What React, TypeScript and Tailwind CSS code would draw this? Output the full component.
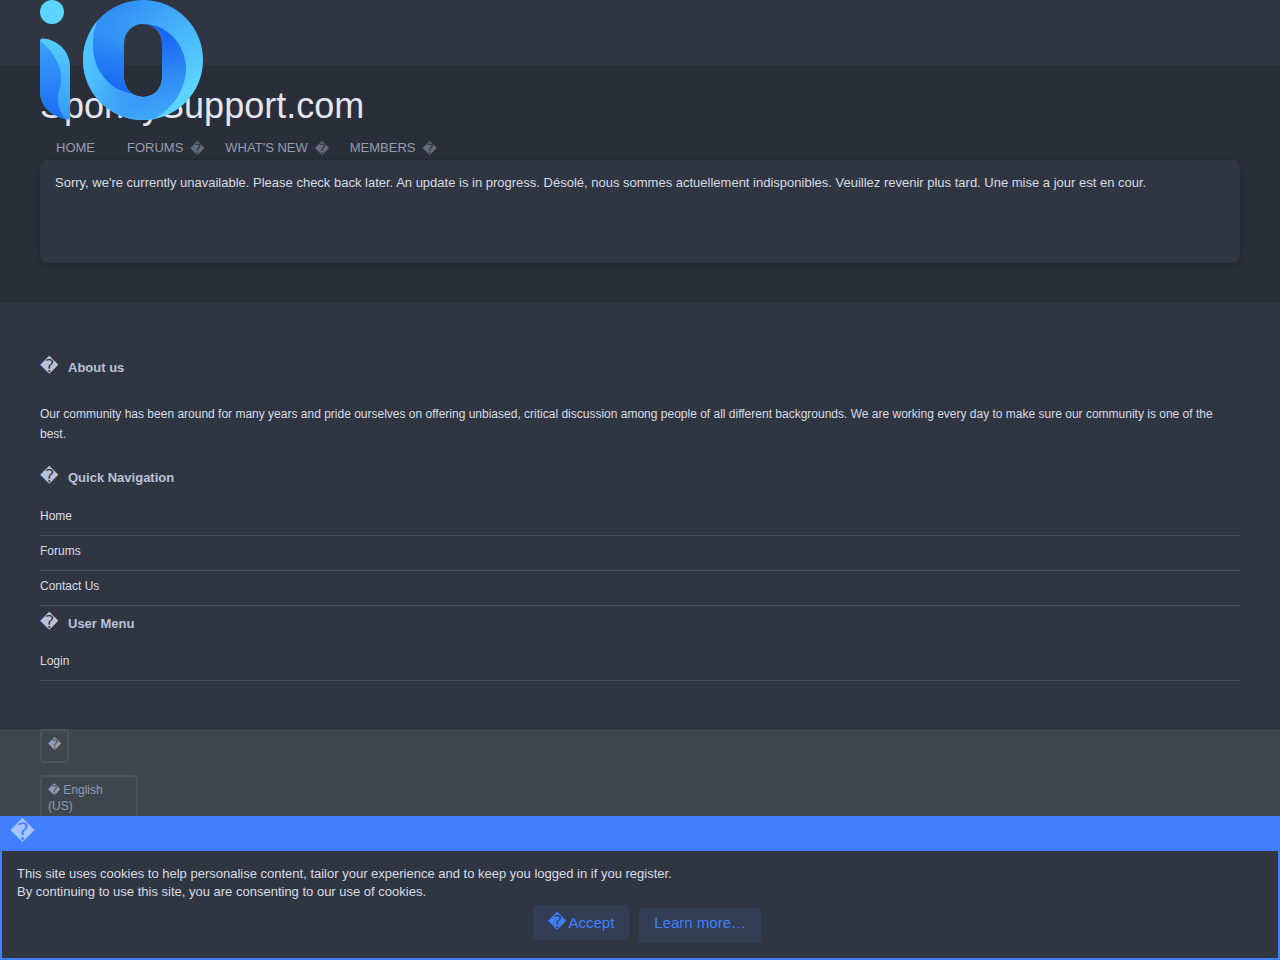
import type { ReactNode } from 'react';

const navItems = [
  { name: 'HOME', dropdown: false },
  { name: 'FORUMS', dropdown: true },
  { name: "WHAT'S NEW", dropdown: true },
  { name: 'MEMBERS', dropdown: true },
];

const quickLinks = ['Home', 'Forums', 'Contact Us'];
const userLinks = ['Login'];

function Glyph({ className = '' }: { className?: string }) {
  return (
    <span aria-hidden="true" className={`font-['DejaVu_Sans',sans-serif] font-normal ${className}`}>
      {'\uFFFD'}
    </span>
  );
}

function Logo() {
  return (
    <svg viewBox="0 0 163 120" className="block w-[163px] h-[120px]" role="img" aria-label="iO">
      <defs>
        <linearGradient id="stem" gradientUnits="userSpaceOnUse" x1="20" y1="42" x2="26" y2="120">
          <stop offset="0" stopColor="#54cbff" />
          <stop offset="1" stopColor="#339af7" />
        </linearGradient>
        <linearGradient id="leaf" gradientUnits="userSpaceOnUse" x1="6" y1="42" x2="14" y2="116">
          <stop offset="0" stopColor="#3ba0f8" />
          <stop offset="1" stopColor="#1b6ff3" />
        </linearGradient>
        <linearGradient id="ring" gradientUnits="userSpaceOnUse" x1="80" y1="0" x2="150" y2="90">
          <stop offset="0" stopColor="#2f8df6" />
          <stop offset="1" stopColor="#5bd5ff" />
        </linearGradient>
        <linearGradient id="sweep" gradientUnits="userSpaceOnUse" x1="126" y1="112" x2="116" y2="36">
          <stop offset="0" stopColor="#3ea5f8" />
          <stop offset="0.5" stopColor="#2d88f6" />
          <stop offset="1" stopColor="#1667f2" />
        </linearGradient>
        <linearGradient id="crescent" gradientUnits="userSpaceOnUse" x1="48" y1="60" x2="116" y2="96">
          <stop offset="0" stopColor="#50c4fe" />
          <stop offset="0.3" stopColor="#48b6fb" />
          <stop offset="1" stopColor="#369af7" stopOpacity="0" />
        </linearGradient>
        <linearGradient id="petal" gradientUnits="userSpaceOnUse" x1="78" y1="94" x2="92" y2="22">
          <stop offset="0" stopColor="#1464f2" />
          <stop offset="0.5" stopColor="#2178f4" stopOpacity="0.8" />
          <stop offset="1" stopColor="#2f8df6" stopOpacity="0" />
        </linearGradient>
        <clipPath id="o">
          <path
            clipRule="evenodd"
            d="M103 0a60 60 0 1 1 0 120a60 60 0 1 1 0-120ZM103 24a19 19 0 0 0-19 19V78a19 19 0 0 0 38 0V43a19 19 0 0 0-19-19Z"
          />
        </clipPath>
      </defs>
      <circle cx="12" cy="12" r="12" fill="#5bd5ff" />
      <path d="M0 41Q0 38 4 38.500C18 40 30 52 30 66V117Q30 120 26 119.500C10 115 0 106 0 90Z" fill="url(#stem)" />
      <path d="M0 41C10 48 21 62 21 77C21 88 18 92 18 99C18 108 21 114 26 119.500C10 115 0 106 0 90Z" fill="url(#leaf)" />
      <g clipPath="url(#o)">
        <path d="M43 0H163V120H43Z" fill="url(#ring)" />
        <path d="M68 0L63 14C51 28 50 56 60 72C68 85 79 92 93 94L103 24V0Z" fill="url(#petal)" />
        <path
          d="M63 13C50 28 50 56 60 72C68 85 79 92 93 94L103 60V24C130 24 146 48 146 68C146 88 134 108 114 119V130H30V0H63Z"
          fill="url(#sweep)"
        />
        <path
          d="M63 13C50 28 50 56 60 72C68 85 79 92 93 94L122 78L146 68C146 88 134 108 114 119V130H30V0H63Z"
          fill="url(#crescent)"
        />
      </g>
    </svg>
  );
}

function FooterHeading({ children }: { children: ReactNode }) {
  return (
    <h3 className="flex h-[35px] items-center gap-[10px] text-[13px] font-bold text-[#b9c2da]">
      <Glyph className="w-[18px] pb-1 text-[18px] leading-none" />
      <span>{children}</span>
    </h3>
  );
}

function FooterLinks({ links }: { links: string[] }) {
  return (
    <ul>
      {links.map((link) => (
        <li key={link} className="h-[35px] border-b border-[#484e59] pt-[5px] leading-5">
          <a href="#" className="hover:text-white">{link}</a>
        </li>
      ))}
    </ul>
  );
}

export default function App() {
  return (
    <div className="flex min-h-screen flex-col bg-[#2a2e38] font-['Liberation_Sans',Arial,sans-serif] text-[13px] text-[#d8dce6]">
      <header className="relative z-10 h-[65px] bg-[#303641] px-10">
        <a href="#" className="inline-block">
          <Logo />
        </a>
      </header>

      <div className="px-10 pt-5">
        <h1 className="text-[36px] leading-[42px] text-[#e3e6f0]">SponkySupport.com</h1>
        <nav className="flex h-[33px] items-center pt-2 text-[#959cb0]">
          {navItems.map((item) => (
            <div key={item.name} className="flex items-center">
              <a href="#" className={item.dropdown ? 'pl-4 hover:text-white' : 'px-4 hover:text-white'}>
                {item.name}
              </a>
              {item.dropdown && (
                <button type="button" aria-label={`${item.name} menu`} className="w-[26px] pt-[3px] pl-[7px] text-left leading-4">
                  <Glyph className="text-sm leading-4 text-[#666c7c]" />
                </button>
              )}
            </div>
          ))}
        </nav>
      </div>

      <main className="px-10 pb-10">
        <div className="min-h-[103px] rounded-lg bg-[#303641] px-[15px] py-[14px] leading-[18px] shadow-[0_2px_8px_rgba(0,0,0,0.2)]">
          Sorry, we're currently unavailable. Please check back later. An update is in progress. Désolé, nous sommes
          actuellement indisponibles. Veuillez revenir plus tard. Une mise a jour est en cour.
        </div>
      </main>

      <footer className="flex grow flex-col text-xs">
        <div className="bg-[#303641] px-10 pt-[47px] pb-12">
          <section>
            <FooterHeading>About us</FooterHeading>
            <p className="pt-[19px] pb-4 leading-5">
              Our community has been around for many years and pride ourselves on offering unbiased, critical discussion
              among people of all different backgrounds. We are working every day to make sure our community is one of
              the best.
            </p>
          </section>
          <section>
            <FooterHeading>Quick Navigation</FooterHeading>
            <div className="pt-[6px]">
              <FooterLinks links={quickLinks} />
            </div>
          </section>
          <section>
            <FooterHeading>User Menu</FooterHeading>
            <div className="pt-[5px]">
              <FooterLinks links={userLinks} />
            </div>
          </section>
        </div>

        <div className="flex grow flex-col items-start gap-3 bg-[#3f454d] px-10 text-[#959cb0]">
          <button type="button" aria-label="Style chooser" className="h-[34px] rounded border-2 border-[#4c525c] px-[6px] pb-0.5 leading-4">
            <Glyph className="text-[13px] leading-4" />
          </button>
          <button type="button" className="w-[98px] rounded border-2 border-[#4c525c] px-[6px] pt-[5px] pb-2 text-left leading-4">
            <span className="flex items-center gap-[3px]">
              <Glyph className="leading-4" />
              <span>English</span>
            </span>
            <span className="block">(US)</span>
          </button>
        </div>
      </footer>

      <div className="fixed inset-x-0 bottom-0 z-20 border-2 border-t-0 border-[#4080ff] bg-[#303641]">
        <div className="h-[35px] bg-[#4080ff] px-2">
          <Glyph className="block text-2xl leading-8 text-[#a6c4ff]" />
        </div>
        <div className="px-[15px] pt-[14px] pb-[15px]">
          <p className="leading-[18px]">
            This site uses cookies to help personalise content, tailor your experience and to keep you logged in if you
            register.
            <br />
            By continuing to use this site, you are consenting to our use of cookies.
          </p>
          <div className="flex items-baseline justify-center gap-[10px] pt-1 pl-[14px] text-[15px] leading-5 text-[#4080ff]">
            <button type="button" className="flex items-baseline gap-[2px] rounded bg-[#323e54] px-[15px] py-[7px]">
              <Glyph className="text-[18px] leading-5" />
              Accept
            </button>
            <a href="#" className="rounded bg-[#323e54] px-[15px] pt-[5px] pb-[10px]">
              Learn more…
            </a>
          </div>
        </div>
      </div>
    </div>
  );
}
